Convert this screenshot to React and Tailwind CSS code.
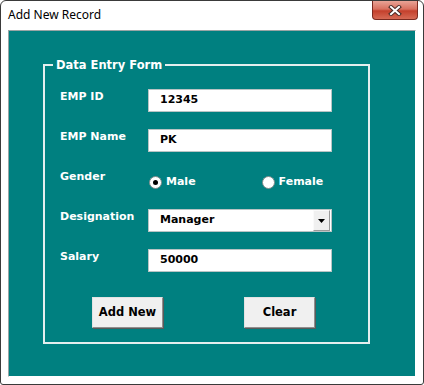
const label = "text-white font-bold text-[11px] leading-[14px] mt-[1px] [font-family:'DejaVu_Sans',sans-serif]";
const field = "h-[23px] w-[184px] bg-white border border-[#b9c4c4] flex items-center pl-[11px] text-black font-bold text-[11px] [font-family:'DejaVu_Sans',sans-serif]";

function Radio({ checked, text }) {
  return (
    <div className="flex items-center gap-[4px]">
      <span className="w-[13px] h-[13px] rounded-full bg-white border border-[#7d8a8a] flex items-center justify-center">
        {checked && <span className="w-[5px] h-[5px] rounded-full bg-black" />}
      </span>
      <span className="text-white font-bold text-[11px] [font-family:'DejaVu_Sans',sans-serif]">{text}</span>
    </div>
  );
}

function Btn({ children, className }) {
  return (
    <button
      className={
        "h-[31px] w-[71px] bg-[#f0f0f0] border border-t-[#e3e3e3] border-l-[#e3e3e3] border-b-[#8f8f8f] border-r-[#8f8f8f] shadow-[1px_1px_0_#5a5a5a] text-black font-bold text-[11.5px] [font-family:'DejaVu_Sans',sans-serif] " +
        (className || "")
      }
    >
      {children}
    </button>
  );
}

export default function App() {
  return (
    <div className="w-[424px] h-[385px] bg-white border border-[#3a3a3a] rounded-t-[6px] rounded-b-[3px] flex flex-col">
      <div className="h-[29px] flex justify-between items-start">
        <span className="pl-[7px] pt-[6px] text-[12px] leading-[16px] text-black [font-family:'Noto_Sans',sans-serif]">
          Add New Record
        </span>
        <div className="mr-[5px] w-[46px] h-[19px] rounded-b-[4px] border border-t-0 border-[#7a2a20] bg-[linear-gradient(#e9a396_0%,#d9705f_45%,#c4402c_55%,#d66a55_100%)] flex items-center justify-center">
          <svg width="14" height="11" viewBox="0 0 14 11">
            <path d="M3 2 L11 9 M11 2 L3 9" stroke="#4a2a25" strokeWidth="4" strokeLinecap="square" />
            <path d="M3 2 L11 9 M11 2 L3 9" stroke="#ffffff" strokeWidth="2" strokeLinecap="square" />
          </svg>
        </div>
      </div>
      <div className="mx-[7px] h-[347px] bg-[#008080] border border-t-[#9aa5a5] border-l-[#9aa5a5] border-b-white border-r-white">
        <fieldset className="ml-[34px] mt-[27px] w-[327px] h-[286px] border-2 border-[#e4eeee] p-0">
          <legend className="ml-[8px] px-[3px] text-white font-bold text-[11.5px] leading-[14px] [font-family:'DejaVu_Sans',sans-serif]">
            Data Entry Form
          </legend>
          <div className="pl-[15px] pt-[17px]">
            <div className="grid grid-cols-[88px_184px] auto-rows-[23px] gap-y-[17px]">
              <span className={label}>EMP ID</span>
              <div className={field}>12345</div>
              <span className={label}>EMP Name</span>
              <div className={field}>PK</div>
              <span className={label}>Gender</span>
              <div className="flex items-center pt-[3px] pl-[1px]">
                <Radio checked text="Male" />
                <div className="ml-[66px]">
                  <Radio text="Female" />
                </div>
              </div>
              <span className={label}>Designation</span>
              <div className={field + " justify-between pr-[1px]"}>
                <span>Manager</span>
                <span className="w-[17px] h-[21px] bg-[#f0f0f0] border border-t-[#fafafa] border-l-[#fafafa] border-b-[#9a9a9a] border-r-[#9a9a9a] flex items-center justify-center">
                  <svg width="7" height="4" viewBox="0 0 7 4">
                    <path d="M0 0 H7 L3.5 4 Z" fill="#000" />
                  </svg>
                </span>
              </div>
              <span className={label}>Salary</span>
              <div className={field}>50000</div>
            </div>
            <div className="flex mt-[25px] ml-[32px] gap-[81px]">
              <Btn>Add New</Btn>
              <Btn>Clear</Btn>
            </div>
          </div>
        </fieldset>
      </div>
    </div>
  );
}
